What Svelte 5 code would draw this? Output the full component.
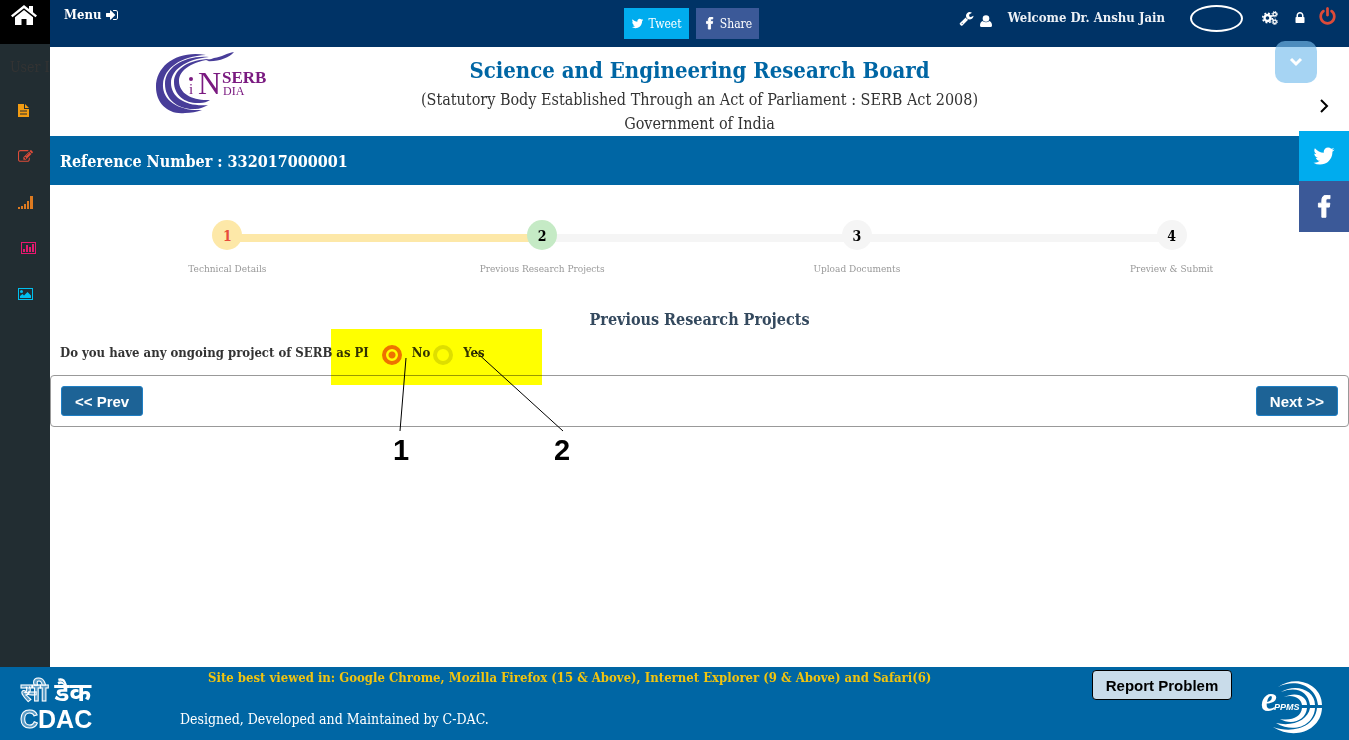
<script lang="ts">
  const twitter = 'M1684 408q-67 98-162 167 1 14 1 42 0 130-38 259.5t-115.5 248.5-184.5 210.5-258 146-323 54.5q-271 0-496-145 35 4 78 4 225 0 401-138-105-2-188-64.5t-114-159.5q33 5 61 5 43 0 85-11-112-23-185.5-111.5t-73.5-205.5v-4q68 38 146 41-66-44-105-115t-39-154q0-88 44-163 121 149 294.5 238.5t371.5 99.5q-8-38-8-74 0-134 94.5-228.5t228.5-94.5q140 0 236 102 109-21 205-78-37 115-142 178 93-10 186-50z';
  const facebook = 'M1343 12v264h-157q-86 0-116 36t-30 108v189h293l-39 296h-254v759h-306v-759h-255v-296h255v-218q0-186 104-288.5t277-102.5q147 0 228 12z';
  const signIn = 'M1312 896q0 26-19 45l-544 544q-19 19-45 19t-45-19-19-45v-288h-448q-26 0-45-19t-19-45v-384q0-26 19-45t45-19h448v-288q0-26 19-45t45-19 45 19l544 544q19 19 19 45zm352-352v704q0 119-84.5 203.5t-203.5 84.5h-320q-32 0-32-64t32-64h320q66 0 113-47t47-113v-704q0-66-47-113t-113-47h-320q-32 0-32-64t32-64h320q119 0 203.5 84.5t84.5 203.5z';
  const wrench = 'M448 1472q0-26-19-45t-45-19-45 19-19 45 19 45 45 19 45-19 19-45zm644-420l-682 682q-37 37-90 37-52 0-91-37l-106-108q-38-36-38-90 0-53 38-91l681-681q39 98 114.5 173.5t173.5 114.5zm634-435q0 39-23 106-47 134-164.5 217.5t-258.5 83.5q-185 0-316.5-131.5t-131.5-316.5 131.5-316.5 316.5-131.5q58 0 121.5 16.5t107.5 46.5q16 11 16 28t-16 28l-293 169v224l193 107q5-3 79-48.5t135.5-81 70.5-35.5q15 0 23.5 10t8.5 25z';
  const lock = 'M640 768h512v-192q0-106-75-181t-181-75-181 75-75 181v192zm832 96v576q0 40-28 68t-68 28h-960q-40 0-68-28t-28-68v-576q0-40 28-68t68-28h32v-192q0-184 132-316t316-132 316 132 132 316v192h32q40 0 68 28t28 68z';
  const power = 'M1664 896q0 156-61 298t-164 245-245 164-298 61-298-61-245-164-164-245-61-298q0-182 80.5-343t226.5-270q43-32 95.5-25t83.5 50q32 42 24.5 94.5t-49.5 84.5q-98 74-151.5 181t-53.5 228q0 104 40.5 198.5t109.5 163.5 163.5 109.5 198.5 40.5 198.5-40.5 163.5-109.5 109.5-163.5 40.5-198.5q0-121-53.5-228t-151.5-181q-42-32-49.5-84.5t24.5-94.5q31-43 84-50t95 25q146 109 226.5 270t80.5 343zm-640-768v640q0 52-38 90t-90 38-90-38-38-90v-640q0-52 38-90t90-38 90 38 38 90z';
  const edit = 'M888 1184l116-116-152-152-116 116v56h96v96h56zm440-720q-16-16-33 1l-350 350q-17 17-1 33t33-1l350-350q17-17 1-33zm80 594v190q0 119-84.5 203.5t-203.5 84.5h-832q-119 0-203.5-84.5t-84.5-203.5v-832q0-119 84.5-203.5t203.5-84.5h832q63 0 117 25 15 7 18 23 3 17-9 29l-49 49q-14 14-32 8-23-6-45-6h-832q-66 0-113 47t-47 113v832q0 66 47 113t113 47h832q66 0 113-47t47-113v-126q0-13 9-22l64-64q15-15 35-7t20 29zm-96-738l288 288-672 672h-288v-288zm444 132l-92 92-288-288 92-92q28-28 68-28t68 28l152 152q28 28 28 68t-28 68z';

  const steps = [
    { label: 'Technical Details', state: 'done' },
    { label: 'Previous Research Projects', state: 'current' },
    { label: 'Upload Documents', state: 'todo' },
    { label: 'Preview & Submit', state: 'todo' },
  ];

  let ongoing = $state('no');
</script>

{#snippet icon(path: string, size: number)}
  <svg class="icon" width={size} height={size} viewBox="0 0 1792 1792" aria-hidden="true"><path d={path} /></svg>
{/snippet}

<div class="page">
  <div class="body">
    <aside>
      <a class="home" href="#home" aria-label="Home">
        <svg width="28" height="24" viewBox="0 0 28 24">
          <path d="M1 12.500 14 2l5 4V3h4v6.300l4 3.200-1.500 1.800L14 5.200 2.500 14.300z" />
          <path d="M14 7 5 14.200V22h6.500v-6h5v6H23v-7.800z" />
        </svg>
      </a>
      <div class="user-id">User ID</div>
      <nav>
        <a class="orange" href="#proposals" aria-label="Proposals">
          <svg width="11" height="13" viewBox="0 0 11 13"><path fill-rule="evenodd" d="M0 0h6v5h5v8H0zM2 6.500v1h7v-1zm0 3v1h7v-1zM7 0l4 4H7z" /></svg>
        </a>
        <a class="red" href="#edit" aria-label="Edit">{@render icon(edit, 15)}</a>
        <a class="amber" href="#progress" aria-label="Progress">
          <svg width="15" height="13" viewBox="0 0 15 13"><path d="M0 11h2v2H0zM3 10h2v3H3zM6 8h2v5H6zM9 5h2v8H9zM12 0h3v13h-3z" /></svg>
        </a>
        <a class="pink" href="#reports" aria-label="Reports">
          <svg width="15" height="12" viewBox="0 0 15 12"><path fill-rule="evenodd" d="M0 0h15v12H0zM1 1v10h13V1zM2 7h2v3H2zM5 3h2v7H5zM8 5h2v5H8zM11 2h2v8h-2z" /></svg>
        </a>
        <a class="cyan" href="#gallery" aria-label="Gallery">
          <svg width="15" height="12" viewBox="0 0 15 12"><path fill-rule="evenodd" d="M0 0h15v12H0zM1 1v10h13V1zM2 10V8l2.500-2L6 7.500 9.500 4 13 7.500V10z" /><circle cx="3.500" cy="3.500" r="1.500" /></svg>
        </a>
      </nav>
    </aside>

    <div class="content">
      <header>
        <a class="menu" href="#menu">Menu {@render icon(signIn, 14)}</a>
        <div class="share">
          <a class="tw" href="#tweet">{@render icon(twitter, 13)} Tweet</a>
          <a class="fb" href="#share">{@render icon(facebook, 13)} Share</a>
        </div>
        <div class="account">
          {@render icon(wrench, 15)}
          <svg class="user" width="12" height="12" viewBox="0 0 12 12"><circle cx="6" cy="3.500" r="3.300" /><path d="M2.500 6Q6 8.500 9.500 6 12 7 12 10.500q0 1.500-1.500 1.500h-9Q0 12 0 10.500 0 7 2.500 6z" /></svg>
          <span class="welcome">Welcome Dr. Anshu Jain</span>
          <span class="avatar"></span>
          <a class="gears" href="#settings" aria-label="Settings">
            <svg width="16" height="14" viewBox="0 0 16 14" fill="none">
              <circle cx="5.500" cy="7" r="3" stroke-width="2.400" />
              <circle cx="5.500" cy="7" r="4.800" stroke-width="1.600" stroke-dasharray="1.900 1.870" />
              <circle cx="12.700" cy="3.200" r="1.700" stroke-width="1.300" />
              <circle cx="12.700" cy="3.200" r="2.700" stroke-width="1" stroke-dasharray="1.200 .92" />
              <circle cx="12.700" cy="10.800" r="1.700" stroke-width="1.300" />
              <circle cx="12.700" cy="10.800" r="2.700" stroke-width="1" stroke-dasharray="1.200 .92" />
            </svg>
          </a>
          <a href="#lock" aria-label="Lock">{@render icon(lock, 14)}</a>
          <a class="logout" href="#logout" aria-label="Log out">{@render icon(power, 19)}</a>
        </div>
      </header>

      <section class="brand">
        <svg class="serb" width="116" height="64" viewBox="0 0 116 64" role="img" aria-label="INDIA SERB">
          <g fill="#483d99">
            <path d="M50 4C22-1 0 14 0 36c0 17 13 28 29 26 6 0 12-1 17-3C22 60 6 49 7 33 8 17 25 5 50 4z" />
            <path d="M53 6C29 4 9 16 9 33c0 16 14 26 30 25 5 0 9-2 13-4C31 56 15 47 15 32 15 19 30 8 53 6z" />
            <path d="M58 8C35 7 18 17 18 31c0 14 12 22 26 21 4 0 7-1 10-3-17 1-31-6-31-19C23 19 36 10 58 8z" />
            <path d="M50 10c12 1 23-3 28-9-7 1-12 5-20 6z" />
          </g>
          <circle cx="35" cy="28" r="2" fill="#7a1a80" />
          <g fill="#7a1a80" font-family="Liberation Serif, serif">
            <text x="33" y="43" font-size="15">i</text>
            <text x="42" y="43" font-size="32">N</text>
            <text x="66" y="32" font-size="17" font-weight="700">SERB</text>
            <text x="67" y="44" font-size="12">DIA</text>
          </g>
        </svg>
        <div class="names">
          <h1>Science and Engineering Research Board</h1>
          <p>(Statutory Body Established Through an Act of Parliament : SERB Act 2008)</p>
          <p>Government of India</p>
        </div>
      </section>

      <div class="reference">Reference Number : 332017000001</div>

      <main>
        <ol class="steps">
          {#each steps as step, i}
            <li class={step.state}>
              <span class="num">{i + 1}</span>
              <span class="label">{step.label}</span>
            </li>
          {/each}
        </ol>

        <h2>Previous Research Projects</h2>

        <div class="question" role="radiogroup" aria-labelledby="ongoing-label">
          <span id="ongoing-label" class="ask">Do you have any ongoing project of SERB as PI</span>
          <label><input type="radio" value="no" bind:group={ongoing} /> No</label>
          <label><input type="radio" value="yes" bind:group={ongoing} /> Yes</label>
          <div class="highlight"></div>
          <svg class="callouts" width="260" height="130" viewBox="0 0 260 130">
            <path d="M75 29 69 102M144 22 232 102" />
            <text x="62" y="131">1</text>
            <text x="223" y="131">2</text>
          </svg>
        </div>

        <div class="pager">
          <button>&lt;&lt; Prev</button>
          <button>Next &gt;&gt;</button>
        </div>
      </main>
    </div>
  </div>

  <footer>
    <svg class="cdac" width="72" height="52" viewBox="0 0 72 52" role="img" aria-label="C-DAC">
      <text class="hindi" x="0" y="24"><tspan class="outline">सी</tspan> डैक</text>
      <text class="latin" x="-1" y="51"><tspan class="outline">C</tspan>DAC</text>
    </svg>
    <div class="notes">
      <p class="best">Site best viewed in: Google Chrome, Mozilla Firefox (15 &amp; Above), Internet Explorer (9 &amp; Above) and Safari(6)</p>
      <p>Designed, Developed and Maintained by C-DAC.</p>
    </div>
    <button class="report">Report Problem</button>
    <svg class="eppms" width="60" height="54" viewBox="0 0 60 54" role="img" aria-label="ePPMS">
      <path d="M16 7C34-6 60 4 60 25h-4C54 6 34-2 16 7z" />
      <path d="M19 12c15-9 34-2 34 13h-5C46 11 34 6 19 12z" />
      <path d="M22 17c12-6 23-1 23 8h-5c-1-7-9-11-18-8z" />
      <path d="M60 28C59 50 33 61 11 47c20 7 42 0 44-19z" />
      <path d="M53 28c-1 17-20 26-39 15 17 4 32-3 34-15z" />
      <path d="M45 28c-1 12-15 18-27 11 12 2 21-2 22-11z" />
      <text class="e" x="-1" y="31">e</text>
      <text class="ppms" x="12" y="30">PPMS</text>
    </svg>
  </footer>

  <button class="collapse" aria-label="Collapse header">
    <svg width="14" height="10" viewBox="0 0 14 10"><path d="M2 2l5 5 5-5" /></svg>
  </button>
  <div class="side-share">
    <button class="toggle" aria-label="Hide sharing">
      <svg width="10" height="14" viewBox="0 0 10 14"><path d="M2 1l6 6-6 6" /></svg>
    </button>
    <a class="tw" href="#twitter" aria-label="Twitter">{@render icon(twitter, 24)}</a>
    <a class="fb" href="#facebook" aria-label="Facebook">{@render icon(facebook, 24)}</a>
  </div>
</div>

<style>
  :global(body) { margin: 0; background: #fff; }
  .page { min-height: 100vh; display: flex; flex-direction: column; font: 14px/20px "Roboto Slab", "DejaVu Serif Condensed", "DejaVu Serif", serif; color: #333; }
  .page * { box-sizing: border-box; }
  a { color: inherit; text-decoration: none; }
  p, h1, h2, ol { margin: 0; padding: 0; }
  svg { display: block; fill: currentColor; flex: none; }
  button { font-family: "Liberation Sans", Arial, sans-serif; cursor: pointer; }

  .body { flex: 1; display: flex; }
  aside { width: 50px; flex: none; background: #222d32; overflow: hidden; }
  .home { display: flex; justify-content: center; height: 44px; padding: 3px 2px 0 0; background: #000; color: #fff; }
  .user-id { padding: 13px 0 10px 10px; white-space: nowrap; color: #333; }
  nav a { display: flex; align-items: center; height: 46px; padding-left: 18px; }
  .orange { color: #f39c12; }
  .red { color: #dd4b39; }
  .amber { color: #dd7a20; }
  nav .pink { padding-left: 21px; color: #e8186f; }
  .cyan { color: #00c0ef; }

  .content { flex: 1; min-width: 0; }
  header { display: grid; grid-template-columns: 1fr auto 1fr; height: 47px; padding: 0 12px 0 14px; background: #003366; color: #fff; }
  .menu { display: flex; gap: 4px; align-items: center; height: 30px; font-size: 13px; font-weight: 700; }
  .share { display: flex; gap: 7px; margin: 8px 18px 0 0; font-size: 12px; }
  .share a { display: flex; gap: 4px; align-items: center; justify-content: center; height: 31px; }
  .share .tw { width: 65px; }
  .share .fb { width: 63px; }
  .share .fb .icon { stroke: #fff; stroke-width: 120; }
  .tw { background: #00acee; color: #fff; }
  .fb { background: #3b5998; color: #fff; }
  .account { display: flex; justify-content: flex-end; align-items: center; height: 36px; }
  .user { margin: 6px 16px 0 6px; }
  .welcome { font-size: 13px; font-weight: 700; white-space: nowrap; color: #ecf0f5; }
  .avatar { width: 53px; height: 27px; margin: 0 19px 0 25px; border: 2px solid #fff; border-radius: 50%; }
  .gears { margin-right: 15px; }
  .gears svg { stroke: #fff; fill: none; }
  .logout { margin-left: 11px; padding-bottom: 4px; color: #dd4b39; }

  .brand { display: grid; grid-template-columns: 1fr auto 1fr; height: 89px; }
  .serb { margin: 4px 0 0 106px; }
  .names { text-align: center; font-size: 16px; line-height: 24px; padding-top: 6px; }
  h1 { font-size: 22px; line-height: 35px; color: #0066a4; }
  .reference { height: 49px; padding-left: 10px; background: #0066a4; color: #fff; font-size: 16px; line-height: 51px; font-weight: 700; }

  .steps { display: grid; grid-template-columns: repeat(4, 1fr); padding: 35px 20px 0; list-style: none; }
  li { position: relative; display: flex; flex-direction: column; align-items: center; }
  li + li::before { content: ""; position: absolute; top: 14px; left: -50%; width: 100%; height: 8px; background: #f5f5f5; }
  li.current::before { background: #fde8a8; }
  .num { position: relative; z-index: 1; width: 30px; height: 30px; border-radius: 50%; background: #f5f5f5; color: #000; font-size: 14px; line-height: 32px; font-weight: 700; text-align: center; }
  .done .num { background: #fde8a8; color: #e74c3c; }
  .current .num { background: #c5eac5; }
  .label { margin-top: 9px; font-size: 10px; color: #999; }
  h2 { margin-top: 30px; text-align: center; font-size: 16px; line-height: 22px; color: #34495e; }

  .question { position: relative; display: flex; align-items: center; height: 44px; padding: 0 10px; font-size: 13px; font-weight: 700; }
  .ask { margin-right: 13px; }
  label { display: flex; align-items: center; gap: 10px; margin-right: 3px; }
  input { appearance: none; width: 20px; height: 20px; margin: 4px 0 0; border: 4px solid #dedede; border-radius: 50%; }
  input:checked { border-color: #ee7210; background: radial-gradient(circle, #ee7210 3px, transparent 4px); }
  .highlight { position: absolute; left: 281px; top: -2px; width: 211px; height: 56px; background: #ff0; mix-blend-mode: multiply; pointer-events: none; }
  .callouts { position: absolute; left: 281px; top: -2px; overflow: visible; pointer-events: none; }
  .callouts path { stroke: #000; }
  .callouts text { font: 700 29px "Liberation Sans", Arial, sans-serif; fill: #000; }

  .pager { display: flex; justify-content: space-between; padding: 10px; border: 1px solid #999; border-radius: 4px; }
  .pager button { height: 30px; padding: 0 13px; border: 1px solid #1f7fc4; border-radius: 3px; background: #1d6396; color: #fff; font-size: 15px; font-weight: 700; }

  footer { display: flex; height: 73px; background: #0066a4; color: #fff; font-size: 14px; }
  .cdac { margin: 10px 87px 0 21px; overflow: visible; }
  .hindi { font: 700 26px "Noto Sans Devanagari", "Noto Sans", sans-serif; }
  .latin { font: 700 25px "Liberation Sans", Arial, sans-serif; }
  .outline { fill: #5b9cc6; stroke: #fff; stroke-width: 1; }
  .notes { flex: 1; }
  .notes p { margin-top: 21px; }
  .notes .best { margin: 1px 0 0 28px; font-size: 13px; font-weight: 700; color: #f1c40f; }
  .report { height: 30px; width: 140px; margin: 3px 30px 0 0; padding: 0; border: 1px solid #000; border-radius: 4px; background: #c9dcea; color: #000; font-size: 15px; font-weight: 700; }
  .eppms { margin: 13px 27px 0 0; overflow: visible; }
  .e { font: italic 700 36px "Liberation Serif", serif; }
  .ppms { font: italic 700 9px "Liberation Sans", Arial, sans-serif; }

  .collapse { position: fixed; right: 32px; top: 41px; z-index: 2; width: 42px; height: 42px; display: flex; align-items: center; justify-content: center; padding: 0; border: 0; border-radius: 10px; background: #77bdeca6; color: #fff; }
  .collapse path { fill: none; stroke: #fff; stroke-width: 3; }
  .side-share { position: fixed; right: 0; top: 81px; z-index: 1; width: 50px; }
  .side-share > * { display: flex; align-items: center; justify-content: center; width: 50px; height: 50px; }
  .side-share .fb { height: 51px; }
  .side-share .fb .icon { stroke: #fff; stroke-width: 70; }
  .toggle { padding: 0; border: 0; background: none; color: #000; }
  .toggle path { fill: none; stroke: #000; stroke-width: 2; }
</style>
